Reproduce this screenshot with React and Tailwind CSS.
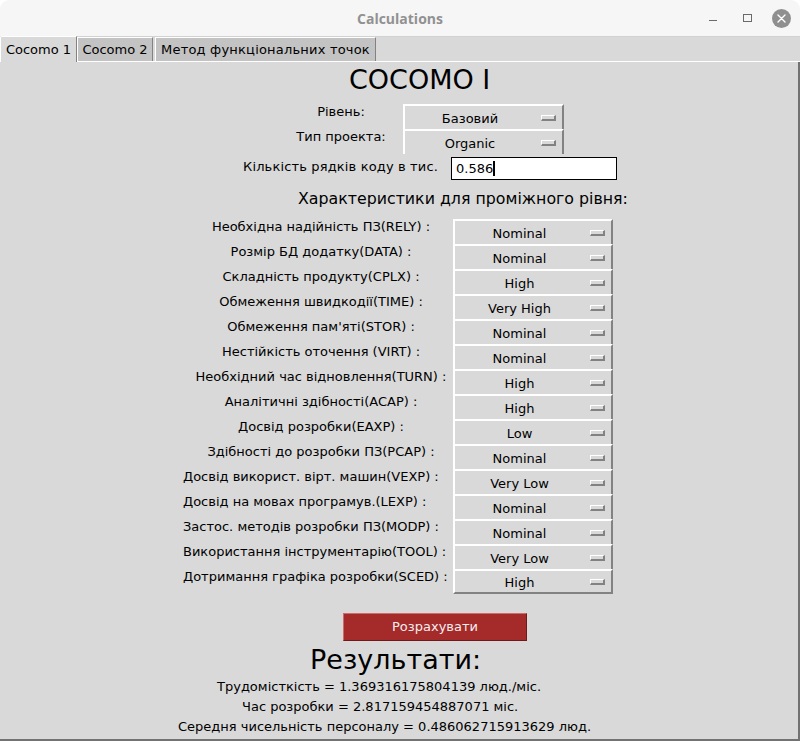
import React from 'react';

const FONT = "font-['DejaVu_Sans',sans-serif]";

const CENTER = 'text-center pl-[6px]';
const LEFT = 'text-left';

const characteristics = [
  ['Необхідна надійність ПЗ(RELY) :', 'Nominal', CENTER],
  ['Розмір БД додатку(DATA) :', 'Nominal', CENTER],
  ['Складність продукту(CPLX) :', 'High', CENTER],
  ['Обмеження швидкодії(TIME) :', 'Very High', CENTER],
  ["Обмеження пам'яті(STOR) :", 'Nominal', CENTER],
  ['Нестійкість оточення (VIRT) :', 'Nominal', CENTER],
  ['Необхідний час відновлення(TURN) :', 'High', CENTER],
  ['Аналітичні здібності(ACAP) :', 'High', CENTER],
  ['Досвід розробки(EAXP) :', 'Low', CENTER],
  ['Здібності до розробки ПЗ(PCAP) :', 'Nominal', CENTER],
  ['Досвід використ. вірт. машин(VEXP) :', 'Very Low', LEFT],
  ['Досвід на мовах програмув.(LEXP) :', 'Nominal', LEFT],
  ['Застос. методів розробки ПЗ(MODP) :', 'Nominal', LEFT],
  ['Використання інструментарію(TOOL) :', 'Very Low', LEFT],
  ['Дотримання графіка розробки(SCED) :', 'High', LEFT],
];

function Indicator() {
  return (
    <span className="absolute right-[6px] top-1/2 -translate-y-1/2 w-[15px] h-[6px] border-t border-l border-white border-r-2 border-b-2 border-r-[#828282] border-b-[#828282] bg-[#d9d9d9]" />
  );
}

// Tk-style OptionMenu: raised box with the small bar indicator on the right
function OptionMenu({ value, width, last = false }) {
  return (
    <div
      className={`relative ${width} h-[25px] shrink-0 flex items-center justify-center pt-[2px] pr-[27px] bg-[#d9d9d9] border-t-2 border-l-2 border-r-2 border-t-white border-l-white border-r-[#828282] ${last ? 'border-b-2 border-b-[#828282]' : ''}`}
    >
      <span className="text-[13px] leading-[15px] text-black whitespace-nowrap">{value}</span>
      <Indicator />
    </div>
  );
}

function TitleBar() {
  return (
    <div className="h-[37px] shrink-0 grid grid-cols-[1fr_auto_1fr] items-center bg-[#f6f6f6] border-b border-[#d2d2d2] rounded-t-[9px]">
      <div />
      <div className="font-['Open_Sans',sans-serif] font-bold text-[14px] text-[#919191] pt-[1px]">
        Calculations
      </div>
      <div className="flex items-center justify-end pr-[2px]">
        <div className="w-[34px] flex justify-center pt-[5px]">
          <span className="block w-[8px] h-px bg-[#6a6a6a]" />
        </div>
        <div className="w-[34px] flex justify-center">
          <span className="block w-[9px] h-[8px] border border-[#6a6a6a]" />
        </div>
        <div className="w-[34px] flex justify-center">
          <span className="w-[19px] h-[19px] rounded-full bg-[#8f8f8f] flex items-center justify-center">
            <svg width="9" height="9" viewBox="0 0 9 9">
              <path d="M1 1L8 8M8 1L1 8" stroke="#ffffff" strokeWidth="1.4" strokeLinecap="round" />
            </svg>
          </span>
        </div>
      </div>
    </div>
  );
}

function Tabs() {
  return (
    <div className="h-[25px] shrink-0 flex items-end border-b border-white bg-[#d9d9d9] text-[13px] text-black">
      <div className="relative z-10 w-[77px] h-[26px] -mb-px flex items-center justify-center bg-[#d9d9d9] border-t border-l border-white border-r border-r-[#828282] rounded-tl-[2px]">
        Cocomo 1
      </div>
      <div className="w-[76px] h-[24px] flex items-center justify-center pt-px bg-[#c3c3c3] border-t border-l border-white border-r border-r-[#828282]">
        Cocomo 2
      </div>
      <div className="ml-[2px] w-[221px] h-[24px] flex items-center justify-center pt-px bg-[#c3c3c3] border-t border-l border-white border-r border-r-[#828282] tracking-[0.2px]">
        Метод функціональних точок
      </div>
    </div>
  );
}

export default function App() {
  return (
    <div className={`w-[800px] h-[741px] bg-white ${FONT}`}>
      <div className="h-full flex flex-col">
        <TitleBar />
        <Tabs />

        <div className="flex-1 flex flex-col bg-[#d9d9d9] border-r-2 border-b-2 border-[#727272] text-black">
          <div className="mt-[2px] ml-[349px] text-[27px] leading-[31px] whitespace-nowrap">COCOMO I</div>

          <div className="mt-[9px] flex">
            <div className="ml-[279px] w-[124px] text-center text-[13px] leading-[15px]">Рівень:</div>
            <OptionMenu value="Базовий" width="w-[161px]" />
          </div>
          <div className="flex">
            <div className="ml-[279px] w-[124px] text-center text-[13px] leading-[15px]">Тип проекта:</div>
            <OptionMenu value="Organic" width="w-[161px]" />
          </div>

          <div className="mt-[3px] flex">
            <div className="ml-[243px] w-[208px] text-[13px] leading-[15px] pt-[2px] whitespace-nowrap tracking-[0.15px]">
              Кількість рядків коду в тис.
            </div>
            <div className="w-[166px] h-[23px] bg-white border border-black flex items-center pl-[4px] text-[13px] leading-[15px]">
              <span>0.586</span>
              <span className="block w-[2px] h-[15px] bg-black" />
            </div>
          </div>

          <div className="mt-[9px] ml-[298px] text-[15.8px] leading-[19px] whitespace-nowrap">
            Характеристики для проміжного рівня:
          </div>

          <div className="mt-[11px] flex flex-col">
            {characteristics.map(([label, value, align], i) => (
              <div key={label} className="flex h-[25px]">
                <div className={`ml-[183px] w-[270px] text-[13px] leading-[15px] whitespace-nowrap ${align}`}>
                  {label}
                </div>
                <OptionMenu value={value} width="w-[160px]" last={i === characteristics.length - 1} />
              </div>
            ))}
          </div>

          <button className="mt-[19px] ml-[343px] w-[184px] h-[28px] flex items-center justify-center bg-[#a52a2a] text-[#f4eeee] text-[13px] border border-t-[#cf6a6a] border-l-[#cf6a6a] border-r-[#6e1a1a] border-b-[#6e1a1a]">
            Розрахувати
          </button>

          <div className="mt-[3px] ml-[310px] text-[27px] leading-[31px] whitespace-nowrap">Результати:</div>

          <div className="mt-[2px] flex flex-col text-[13px] leading-[20px] whitespace-nowrap">
            <div className="ml-[217px]">Трудомісткість = 1.369316175804139 люд./міс.</div>
            <div className="ml-[242px]">Час розробки = 2.817159454887071 міс.</div>
            <div className="ml-[178px]">Середня чисельність персоналу = 0.486062715913629 люд.</div>
          </div>
        </div>
      </div>
    </div>
  );
}
